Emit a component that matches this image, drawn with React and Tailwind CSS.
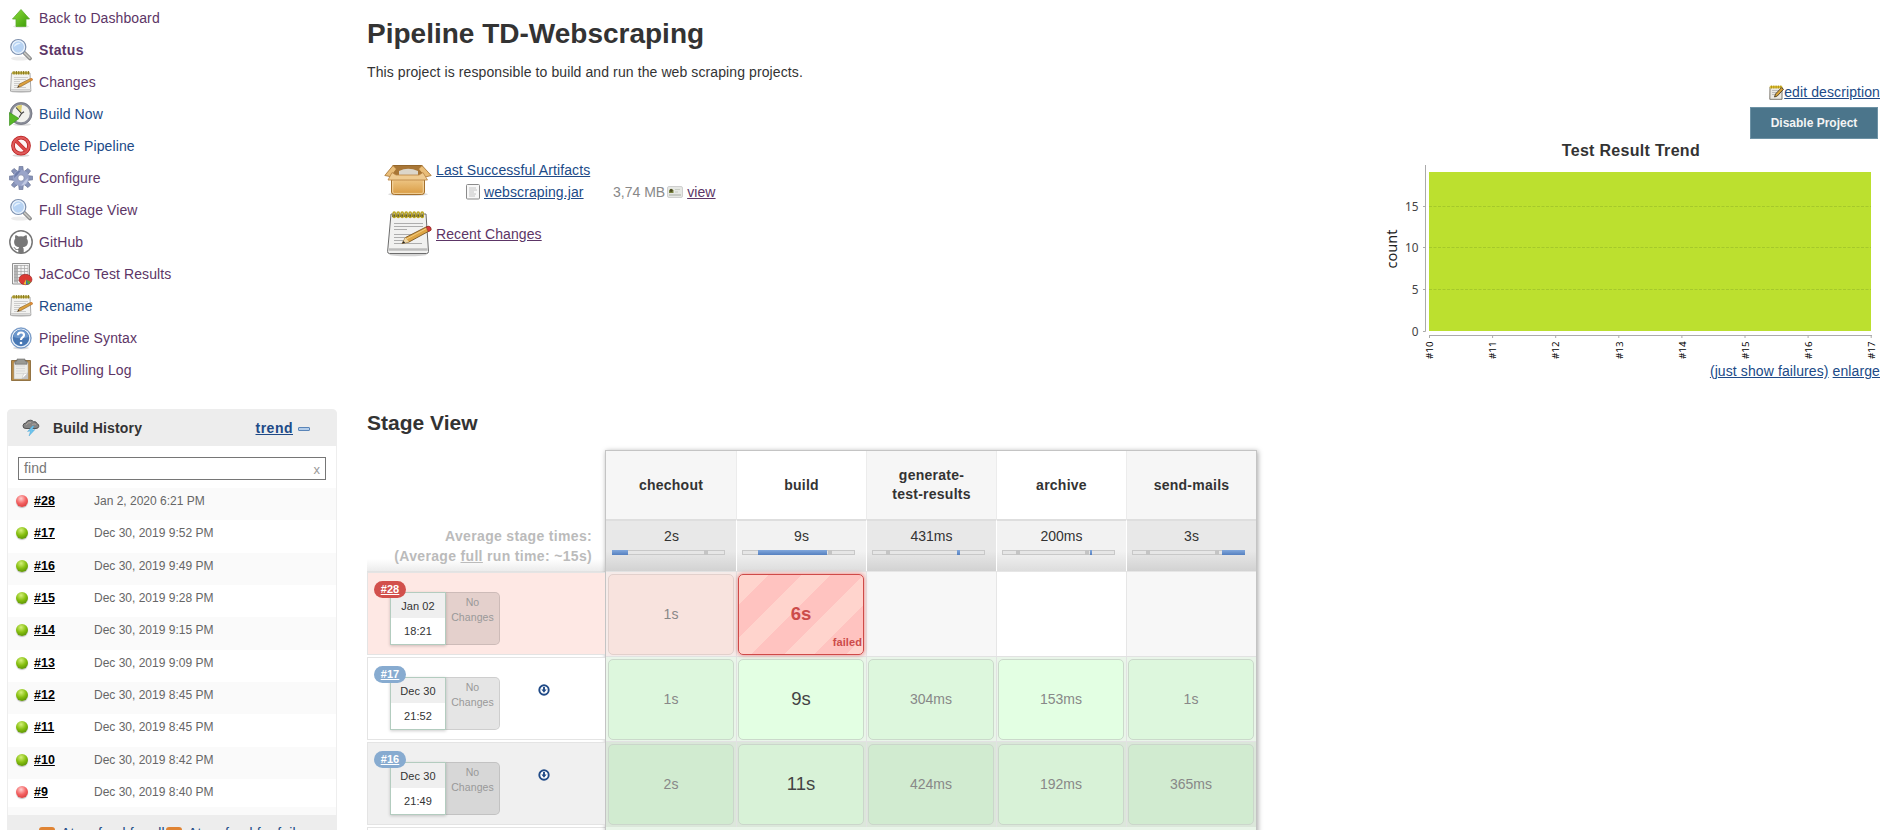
import React from "react";

const Arrow = () => (
  <svg width="24" height="24" viewBox="0 0 24 24">
    <defs>
      <linearGradient id="ga" x1="0" y1="0" x2="1" y2="1">
        <stop offset="0" stopColor="#8ede3c" />
        <stop offset="1" stopColor="#3a9a06" />
      </linearGradient>
    </defs>
    <ellipse cx="12" cy="20.5" rx="8" ry="1.5" fill="#e4e4e4" />
    <path d="M12 3.500 20.500 13H17v7.500H7V13H3.500Z" fill="url(#ga)" stroke="#5cab2c" strokeWidth=".8" />
  </svg>
);

const Search = () => (
  <svg width="24" height="24" viewBox="0 0 24 24">
    <ellipse cx="11" cy="20.500" rx="9" ry="2" fill="#ececec" />
    <path d="m15 14.500 6 6" stroke="#858585" strokeWidth="3.800" strokeLinecap="round" />
    <path d="m15.500 15 5.300 5.200" stroke="#c4c4c0" strokeWidth="1.800" strokeLinecap="round" />
    <circle cx="9.300" cy="9" r="7.500" fill="#bcd8f6" stroke="#7f90ac" strokeWidth="1.200" />
    <circle cx="9.300" cy="9" r="6.200" fill="#b7d3f3" stroke="#f2f7fc" strokeWidth="1.100" />
    <path d="M4.800 9a4.500 4.500 0 0 1 7-3.500Q8 6 4.800 9Z" fill="#e6f2fd" />
  </svg>
);

const Notepad = ({ size = 24 }) => (
  <svg width={size} height={size} viewBox="0 0 24 24">
    <ellipse cx="12" cy="21.700" rx="10" ry="1.300" fill="#d4d4d4" />
    <path d="M2.500 3h18.500l.9 18.200H1.500Z" fill="#f3f3f1" stroke="#888" strokeWidth=".7" />
    <path d="M2 19.500h19.700" stroke="#cfcfcf" />
    <path d="M3 1.700h17.500v2.500H3Z" fill="#c2b14a" />
    <path d="M5 1v3.500M7.400 1v3.500M9.800 1v3.500M12.200 1v3.500M14.600 1v3.500M17 1v3.500M19.400 1v3.500" stroke="#85761a" />
    <path d="M5 7.500h14M5 9.500h12M5 11.500h6M5 13.500h9M5 15.500h5M5 17.500h12" stroke="#b4b4b4" strokeWidth=".6" />
    <path d="m8.500 17.500 2-3.500L21 8.700q2.500-.5 2.500 1.300L12 16.500Z" fill="#dca03c" stroke="#87602a" strokeWidth=".6" />
    <path d="m20.700 8.800 1.300 2.500 1.500-1q.5-2.200-1.200-2.200Z" fill="#dc8a3c" />
    <path d="m8.500 17.500 1-1.700 1 .9Z" fill="#333" />
  </svg>
);

const NotepadLarge = () => (
  <svg width="46" height="46" viewBox="0 0 46 46">
    <ellipse cx="22" cy="43.500" rx="19" ry="1.800" fill="#d4d4d4" />
    <path d="M5 3h35l2.500 37.500q0 2-2 2h-37q-2 0-1.900-2Z" fill="#f1f1f0" stroke="#6c6c6c" />
    <path d="M3 38.500h38.500" stroke="#bcbcbc" strokeWidth="2.500" />
    <path d="M6 3.500h32v2.500H6Z" fill="#444" />
    <g fill="none" stroke="#b9a41c" strokeWidth="1.300">
      {[0, 1, 2, 3, 4, 5, 6, 7].map((i) => (
        <rect key={i} x={7 + i * 4} y="1" width="2.400" height="5.500" rx="1.200" />
      ))}
    </g>
    <path d="M8 12.500h29M8 15.500h29M8 18.500h13M8 23.500h24M8 26.500h19M8 29.500h15M8 32.500h28" stroke="#9c9c9c" strokeWidth=".8" />
    <path d="m16 32.500 3.500-6L41 15.500q4-.5 4 3.500L23 31Z" fill="#dea544" stroke="#7a5722" strokeWidth=".9" />
    <path d="m19.500 26.500 3.500 4.500-7 1.500Z" fill="#efd8a8" />
    <path d="M20.500 28 42 16.700" stroke="#f3cd80" />
    <path d="m40 16 2.500 4.700 2.500-1.500q.5-4-2.500-4Z" fill="#d8363c" stroke="#8c2a2a" strokeWidth=".6" />
    <path d="m16 32.500 1.500-2.600 1.700 1.900Z" fill="#222" />
  </svg>
);

const EditPad = () => (
  <svg width="15" height="15" viewBox="0 0 15 15">
    <path d="M1 2h12v12.300H.8Z" fill="#ece9e2" stroke="#6f6a60" strokeWidth=".9" />
    <path d="M.8.800h12.400v2.500H.8Z" fill="#e2c22e" />
    <path d="M2.500.500v3M4.800.500v3M7.100.500v3M9.400.500v3M11.700.500v3" stroke="#957d18" strokeWidth=".7" />
    <path d="M3 5.500h7M3 7.500h5M3 9.500h3" stroke="#aaa" strokeWidth=".7" />
    <path d="m5.500 12 1-3L12.500 2.700l2 1.500L8.300 11Z" fill="#dca63c" stroke="#4c3c20" strokeWidth=".9" />
  </svg>
);

const Clock = () => (
  <svg width="24" height="24" viewBox="0 0 24 24">
    <ellipse cx="13" cy="22.500" rx="9" ry="1.300" fill="#ddd" />
    <circle cx="12" cy="11.500" r="10" fill="#f3f3ee" stroke="#8a8d98" strokeWidth="2.400" />
    <circle cx="12" cy="11.500" r="11" fill="none" stroke="#696c78" strokeWidth=".6" />
    <path d="M12 11.500 7 5q2.500-2.500 6-2Z" fill="#ddcf6e" />
    <path d="m7 5.500 5.500 6-2.500 4M12.500 11.500l2.500-1.800" fill="none" stroke="#444" strokeWidth="1.100" />
    <path d="M.5 10.500 10 16.500.5 23.500Z" fill="#58b826" stroke="#2f8a12" strokeWidth=".6" />
  </svg>
);

const Deny = () => (
  <svg width="24" height="24" viewBox="0 0 24 24">
    <ellipse cx="12" cy="21.500" rx="8.500" ry="1.300" fill="#d8d8d8" />
    <circle cx="12" cy="11.700" r="8" fill="#fdf6f6" stroke="#b81e1e" strokeWidth="3.700" />
    <path d="m6.500 6.200 11 11" stroke="#c62a2a" strokeWidth="3.500" />
    <circle cx="12" cy="11.700" r="8" fill="none" stroke="#df5a5a" strokeWidth="2.200" />
    <path d="m6.500 6.200 11 11" stroke="#dc4a4a" strokeWidth="2.200" />
  </svg>
);

const teeth = [0, 45, 90, 135, 180, 225, 270, 315];
const Gear = () => (
  <svg width="24" height="24" viewBox="0 0 24 24">
    <g stroke="#6b7596" strokeWidth=".7" fill="#8793b8">
      {teeth.map((a) => (
        <path key={a} d="m9.600 6 .6-5.700h3.600l.6 5.700Z" transform={`rotate(${a} 12 12)`} />
      ))}
    </g>
    <circle cx="12" cy="12" r="8" fill="#9aa5c9" />
    <path d="M5 12a7 7 0 0 1 7-7.500Q9 9 5 12Z" fill="#6f7eab" />
    <path d="M19 12a7 7 0 0 1-7 7.500Q15 15 19 12Z" fill="#c0c8e2" />
    <circle cx="12" cy="12" r="3.200" fill="#fff" stroke="#727d9f" strokeWidth=".7" />
  </svg>
);

const Report = () => (
  <svg width="24" height="24" viewBox="0 0 24 24">
    <path d="M3.500 1.500h17v20.500h-17Z" fill="#f4f4f4" stroke="#777" strokeWidth=".8" />
    <path d="M5 3h3.500v17.500H5Z" fill="#b4b4b4" />
    <path d="M5 3.500h14M5 6.500h14M5 9.500h14M5 12.500h14M5 15.500h14M5 18.500h14M8.500 3v18M12 3v18M15.500 3v18M19 3v18" stroke="#a4a4a4" strokeWidth=".7" />
    <ellipse cx="16.500" cy="17.500" rx="6.500" ry="5.200" fill="#da3a34" stroke="#982020" strokeWidth=".6" />
    <path d="M17 17.500v5l-2.500-.3Z" fill="#eac83a" />
    <path d="m17 17.500 5 2.500q-1 2-3.500 2.500Z" fill="#5ba53a" />
    <path d="m17 17.500 2 4.800-2 .4Z" fill="#3f6cb0" />
  </svg>
);

const Help = () => (
  <svg width="24" height="24" viewBox="0 0 24 24">
    <ellipse cx="12" cy="22" rx="8" ry="1.300" fill="#ddd" />
    <circle cx="12" cy="12" r="10.300" fill="#4f7fbb" stroke="#7a9ac4" strokeWidth=".7" />
    <circle cx="12" cy="12" r="8.900" fill="#4878b4" stroke="#e8f0f8" strokeWidth="1.300" />
    <path d="M4.500 11A7.500 7.500 0 0 1 19.500 11Q12 13.500 4.500 11Z" fill="#6b97cc" />
    <path d="M9 9.300q0-2.800 3-2.800t3 2.500q0 1.300-1.500 2.300T12 14" fill="none" stroke="#fff" strokeWidth="2.200" />
    <circle cx="12" cy="17" r="1.300" fill="#fff" />
  </svg>
);

const Clipboard = () => (
  <svg width="24" height="24" viewBox="0 0 24 24">
    <path d="M2.500 2.500h19v20h-19Z" fill="#b88a45" stroke="#80602c" strokeWidth=".8" />
    <path d="M5 4.500h14V21H5Z" fill="#ecece8" stroke="#aaa" strokeWidth=".5" />
    <path d="M7 8h9M7 10.500h9M7 13h9M7 15.500h8" stroke="#d2d2d2" strokeWidth=".7" />
    <path d="m13 21 6-6v6Z" fill="#c4c4c4" />
    <path d="m13 21 1.500-5L19 15Z" fill="#fff" stroke="#aaa" strokeWidth=".4" />
    <path d="M8 1h8v2h2v3.200H6V3h2Z" fill="#9a9a94" stroke="#666" strokeWidth=".6" />
  </svg>
);

const GitHub = () => (
  <svg width="24" height="24" viewBox="0 0 24 24">
    <circle cx="12" cy="12" r="11.200" fill="#fff" stroke="#777" strokeWidth="1.500" />
    <path
      d="M9.300 23v-3c-2.500.4-3.300-.5-3.900-1.700-.4-.7-.9-1-1.200-1.300 1.500-.2 2 1 2.700 1.700.8.7 1.600.6 2.400.2.100-.8.500-1.300.9-1.700-3-.4-5.100-1.700-5.100-5.400 0-1.300.4-2.400 1.200-3.200-.3-.9-.4-2.200.1-3.400 1.300 0 2.400.7 3.200 1.300a9.600 9.600 0 0 1 4.800 0c.8-.6 1.900-1.300 3.200-1.300.5 1.200.4 2.500.1 3.400.8.800 1.200 1.900 1.200 3.200 0 3.700-2.100 5-5.100 5.400.6.500.9 1.300.9 2.500V23Z"
      fill="#777"
    />
  </svg>
);

const Box = () => (
  <svg width="48" height="36" viewBox="0 0 48 36">
    <defs>
      <linearGradient id="gb" x1="0" y1="0" x2="0" y2="1">
        <stop offset="0" stopColor="#efc888" />
        <stop offset="1" stopColor="#d99b42" />
      </linearGradient>
    </defs>
    <ellipse cx="24" cy="33.300" rx="20" ry="1.800" fill="#ddd" />
    <path d="M9 4.500h29l4 10H5Z" fill="#a87636" stroke="#94672b" />
    <path d="M15 10q9-4.500 19 0v5H15Z" fill="#dcd6ca" />
    <path d="M7.500 17.500h33V31q0 2.500-3 2.500h-27q-3 0-3-2.500Z" fill="url(#gb)" stroke="#a4702d" />
    <path d="M9 4.500.8 14.500l6 1.200L12.500 8ZM38 4.500l9.200 10-6 1.500L34.500 8Z" fill="#e9bd78" stroke="#a4702d" strokeWidth=".8" />
    <path d="m8 11.500-4 7.500h39.500L39 11.500 35 14H12Z" fill="#efcb91" stroke="#b98443" strokeWidth=".8" />
    <path d="M8.700 20v11q0 1.400 1.500 1.400h27.600q1.500 0 1.500-1.400V20" fill="none" stroke="#f7dfb4" strokeWidth=".8" />
  </svg>
);

const FileIcon = () => (
  <svg width="14" height="16" viewBox="0 0 14 16">
    <rect x=".5" y=".5" width="13" height="14.500" rx="1" fill="#f8f8f8" stroke="#8a8a8a" />
    <path d="M3 4h7M3 6h8M3 8h5M3 10h7M3 12h6" stroke="#b5b5b5" strokeWidth=".8" />
  </svg>
);

const Fingerprint = () => (
  <svg width="16" height="13" viewBox="0 0 16 13">
    <rect x=".5" y=".5" width="15" height="11" rx="1.500" fill="#e6e8e4" stroke="#cfcfcf" />
    <path d="M2 7V4.500q2-3.500 4.500 0V7Z" fill="#7a8440" />
    <circle cx="4.200" cy="4.500" r="1.400" fill="#4a4a20" />
    <path d="M8 3.500h5M8 6h3" stroke="#c8ccc4" />
    <path d="M2 9h12" stroke="#a8aca4" />
  </svg>
);

const Storm = () => (
  <svg width="18" height="18" viewBox="0 0 18 18">
    <path d="M4 9.500Q.7 9.500 1 6.700 1.300 4 4 4 5 1 8.500 1.200q2 0 3 1.500 3-.5 3.500 2 2.200.5 1.800 2.700-.3 2.100-2.800 2.100Z" fill="#858585" stroke="#4a4a4a" strokeWidth=".9" />
    <path d="M4 6q2-3 5-2.500M10 6q2-2 4-.5" fill="none" stroke="#b0a49c" strokeWidth=".9" />
    <path d="m10.500 7-5 5.500 3-.5L7 17l6-6.500-3 .5L12 7Z" fill="#6cc4ee" stroke="#449ed0" strokeWidth=".4" />
  </svg>
);

const Ball = ({ red }) => (
  <span
    className={
      "mt-px h-[12px] w-[12px] shrink-0 rounded-full shadow-[0_1px_1px_rgba(0,0,0,0.25)] " +
      (red
        ? "bg-[radial-gradient(circle_at_42%_30%,#ffd0d0_0%,#f46464_45%,#c92727_100%)]"
        : "bg-[radial-gradient(circle_at_42%_28%,#d5f07a_0%,#87c010_45%,#437a00_100%)]")
    }
  />
);

const nav = [
  ["Back to Dashboard", Arrow, 0],
  ["Status", Search, 2],
  ["Changes", Notepad, 0],
  ["Build Now", Clock, 1],
  ["Delete Pipeline", Deny, 1],
  ["Configure", Gear, 0],
  ["Full Stage View", Search, 0],
  ["GitHub", GitHub, 0],
  ["JaCoCo Test Results", Report, 0],
  ["Rename", Notepad, 1],
  ["Pipeline Syntax", Help, 0],
  ["Git Polling Log", Clipboard, 0],
];
const navStyle = ["text-[#5c3566]", "text-[#204a87]", "font-bold tracking-[0.35px] text-[#5c3566]"];

const builds = [
  ["#28", "Jan 2, 2020 6:21 PM", true],
  ["#17", "Dec 30, 2019 9:52 PM"],
  ["#16", "Dec 30, 2019 9:49 PM"],
  ["#15", "Dec 30, 2019 9:28 PM"],
  ["#14", "Dec 30, 2019 9:15 PM"],
  ["#13", "Dec 30, 2019 9:09 PM"],
  ["#12", "Dec 30, 2019 8:45 PM"],
  ["#11", "Dec 30, 2019 8:45 PM"],
  ["#10", "Dec 30, 2019 8:42 PM"],
  ["#9", "Dec 30, 2019 8:40 PM", true],
];

const Rss = () => (
  <svg className="mt-[4px] shrink-0" width="16" height="16" viewBox="0 0 16 16">
    <rect width="16" height="16" rx="3" fill="#e08434" />
    <circle cx="4.500" cy="11.500" r="1.500" fill="#fff" />
    <path d="M3 7.500a5.500 5.500 0 0 1 5.500 5.500M3 4a9 9 0 0 1 9 9" stroke="#fff" strokeWidth="1.500" fill="none" />
  </svg>
);

function Sidebar() {
  return (
    <aside className="w-[367px] shrink-0">
      <nav className="flex h-[409px] flex-col pt-[2px]">
        {nav.map(([label, Icon, s]) => (
          <a key={label} className={"flex h-8 items-center gap-[6px] pl-[9px] " + navStyle[s]}>
            <Icon />
            <span>{label}</span>
          </a>
        ))}
      </nav>
      <section className="ml-[7px] w-[330px] rounded-t-[5px] border-x border-[#eeeeee]">
        <header className="-mx-px flex h-[37px] items-center rounded-t-[5px] bg-[#ededed] pl-[15px] font-bold">
          <Storm />
          <span className="ml-[13px] grow tracking-[0.15px]">Build History</span>
          <a className="tracking-[0.5px] text-[#204a87] underline">trend</a>
          <span className="mt-[2px] mr-[27px] ml-[5px] h-1 w-3 rounded-[1px] border border-[#5a85b8] bg-[#b4cdea]" />
        </header>
        <div className="h-[42px] px-[10px] pt-[11px]">
          <div className="flex h-[23px] items-center justify-between border border-[#767676] px-[5px] text-[#777]">
            <span className="pb-px">find</span>
            <span className="mt-[2px] text-[13px] text-[#999]">x</span>
          </div>
        </div>
        <div className="flex h-[327px] flex-col overflow-hidden">
          {builds.map(([id, date, red], i) => (
            <div
              key={id}
              className={
                "flex shrink-0 pt-[6px] pl-[8px] text-[12px] leading-[14px] tracking-normal " +
                (i === 9 ? "h-[28px] " : "h-[32.35px] ") +
                (i % 2 ? "bg-white" : "bg-[#fafafa]")
              }
            >
              <Ball red={red} />
              <a className="ml-[6px] w-[60px] text-[12.5px] font-bold text-black underline">{id}</a>
              <span className="text-[#666]">{date}</span>
            </div>
          ))}
          <div className="h-4 bg-[#fafafa]" />
        </div>
        <footer className="-mx-px flex h-[60px] bg-[#ededed] pt-[8px] pl-[32px] text-[#204a87]">
          <Rss />
          <span className="ml-[6px] w-[105px] whitespace-nowrap">Atom feed for all</span>
          <Rss />
          <span className="ml-[6px] whitespace-nowrap">Atom feed for failures</span>
        </footer>
      </section>
    </aside>
  );
}

const xt = ["#10", "#11", "#12", "#13", "#14", "#15", "#16", "#17"];
const yt = [
  [15, 136.5],
  [10, 177.5],
  [5, 219.5],
  [0, 261.5],
];
function Chart() {
  return (
    <svg width="510" height="200" viewBox="-10 90 510 200" className="block font-['Noto_Sans',sans-serif] tracking-normal">
      <rect x="49" y="102" width="442" height="159" fill="#bce02f" />
      <path d="M49 136.500H491M49 177.500H491M49 219.500H491" stroke="#a5c92a" strokeDasharray="3 1.500" />
      <path d="M45.500 95V261.500M43 136.500h2.500M43 177.500h2.500M43 219.500h2.500M43 261.500h2.500M49 265.500H492" stroke="#aaa" fill="none" />
      {xt.map((t, i) => (
        <g key={t}>
          <path d={`M${49.5 + i * 63.1} 265v3`} stroke="#aaa" />
          <text transform={`translate(${53.2 + i * 63.1} 289) rotate(-90)`} fontSize="9.800" fill="#000">
            {t}
          </text>
        </g>
      ))}
      {yt.map(([t, y]) => (
        <text key={t} x="38.500" y={y + 4.3} textAnchor="end" fontSize="11.800" fill="#444">
          {t}
        </text>
      ))}
      <text transform="translate(17 198.500) rotate(-90)" fontSize="14.500" fill="#222">
        count
      </text>
    </svg>
  );
}

const stages = [
  ["chechout", "2s", 0, 16, [94]],
  ["build", "9s", 16, 69, [88]],
  ["generate-test-results", "431ms", 85, 3, [16]],
  ["archive", "200ms", 88, 2, [16, 85]],
  ["send-mails", "3s", 90, 23, [16, 85]],
];

const rows = [
  { id: "#28", d: "Jan 02", t: "18:21", kind: "fail", cells: ["1s", "6s", "", "", ""] },
  { id: "#17", d: "Dec 30", t: "21:52", kind: "ok", cells: ["1s", "9s", "304ms", "153ms", "1s"] },
  { id: "#16", d: "Dec 30", t: "21:49", kind: "alt", cells: ["2s", "11s", "424ms", "192ms", "365ms"] },
];
const rowBg = { fail: "bg-[#fee8e4]", ok: "bg-white", alt: "bg-[#f0f0f0]" };

function RunInfo({ r }) {
  return (
    <div className={"relative mb-[2px] h-[83px] border-y border-l border-[#e4e4e4] pt-[19px] pl-[22px] " + rowBg[r.kind]}>
      <div className="flex text-[10.5px] leading-[15px] tracking-[0.1px]">
        <div className="z-[1] h-[53px] w-[56px] border border-[#b3ccbf] bg-white text-center text-[11px] text-[#333] shadow-[0_1px_3px_rgba(0,0,0,0.2)]">
          <div className="h-[25px] bg-[#efefef] pt-[6px]">{r.d}</div>
          <div className="pt-[6px]">{r.t}</div>
        </div>
        <div className="-ml-px h-[53px] w-[55px] rounded-r-[5px] border border-black/10 bg-black/10 pt-[2px] text-center text-[#999]">
          No
          <br />
          Changes
        </div>
        {r.kind !== "fail" && (
          <svg className="mt-[7px] ml-[38px]" width="12" height="12" viewBox="0 0 12 12">
            <circle cx="6" cy="6" r="4.700" fill="#fff" stroke="#204a87" strokeWidth="1.900" />
            <path d="M6 3v3" stroke="#204a87" strokeWidth="1.900" />
            <path d="M3.400 5.600h5.200L6 8.800Z" fill="#204a87" />
          </svg>
        )}
      </div>
      <a
        className={
          "absolute top-[8px] left-[6px] z-[2] h-[17px] w-[32px] rounded-full text-center text-[11px] leading-[16px] font-bold text-white underline " +
          (r.kind === "fail" ? "bg-[#d2504c]" : "bg-[#87abd0]")
        }
      >
        {r.id}
      </a>
    </div>
  );
}

function cellClass(kind, i) {
  const odd = i % 2 === 1;
  if (kind === "fail")
    return i === 1
      ? "border-[#cf4a48] shadow-[0_0_4px_rgba(220,50,50,0.6)] bg-[repeating-linear-gradient(135deg,#ffd4cd_0,#ffd4cd_21px,#ffc3c0_21px,#ffc3c0_44px)]"
      : "border-[#e2d0cc] bg-[#f8e3de]";
  if (kind === "ok") return "border-[#cbd9cb] " + (odd ? "bg-[#e3ffe3]" : "bg-[#ddf7dd]");
  return "border-[#cbd6cb] " + (odd ? "bg-[#d8f2d7]" : "bg-[#d1ebd0]");
}
function cellText(kind, i) {
  if (i !== 1) return " text-[#888]";
  return kind === "fail" ? " text-[18.5px] font-bold text-[#cc4c4a]" : " text-[18.5px] text-[#444]";
}
const cellOuter = { fail: "bg-[#f6ebe9]", ok: "bg-[#e9f5e9]", alt: "bg-[#dbe7da]" };

function StageTable() {
  return (
    <div className="flex">
      <div className="w-[238px] shrink-0">
        <div className="flex h-[122px] flex-col items-end justify-end border-b border-[#e2e2e2] bg-[linear-gradient(to_top,#ececec_0,#fff_12px)] pr-[13px] pb-[5px] leading-5 font-bold tracking-[0.33px] text-[#bbb]">
          <div>Average stage times:</div>
          <div>
            (Average <span className="underline">full</span> run time: ~15s)
          </div>
        </div>
        {rows.map((r) => (
          <RunInfo key={r.id} r={r} />
        ))}
        <div className="h-[83px] border-t border-l border-[#e4e4e4] bg-white" />
      </div>
      <div className="w-[652px] shrink-0 border border-[#c4c4c4] shadow-[1px_1px_5px_rgba(0,0,0,0.35)]">
        <div className="grid grid-cols-5">
          {stages.map(([name, avg, x, w, marks], i) => (
            <div key={name}>
              <div
                className={
                  "flex h-[68px] items-center justify-center px-[18px] text-center leading-[19px] font-bold tracking-[0.25px] text-[#333] " +
                  (i ? "border-l border-[#ececec] " : "") +
                  (i % 2 ? "bg-white" : "bg-[#f6f6f6]")
                }
              >
                {name}
              </div>
              <div
                className={
                  "h-[52px] border-t-2 border-[#dedede] pt-[6px] " +
                  (i % 2
                    ? "bg-[linear-gradient(#f2f2f2_60%,#dddddd)]"
                    : "bg-[linear-gradient(#e8e8e8_60%,#d2d2d2)]") +
                  (i ? " border-l border-l-white pl-[5px]" : " pl-[6px]")
                }
              >
                <div className="-ml-[5px] text-center leading-[19px] tracking-normal">{avg}</div>
                <div className="relative mt-[4px] h-[5px] w-[113px] border border-[#c8c8c8] bg-[#e6e6e6]">
                  {marks.map((m) => (
                    <span key={m} className="absolute -top-px h-[5px] w-[4px] bg-[#c4c4c4]" style={{ left: m - 3 }} />
                  ))}
                  <span
                    className="absolute -top-px h-[5px] bg-[linear-gradient(#82a8dc,#5580c0)]"
                    style={{ left: x - 1, width: w }}
                  />
                </div>
              </div>
            </div>
          ))}
        </div>
        {rows.map((r) => (
          <div key={r.id} className="grid h-[85px] grid-cols-5">
            {r.cells.map((c, i) =>
              c ? (
                <div
                  key={i}
                  className={
                    "border-t border-[#e2e2e2] p-[2px] " + (i ? "border-l pl-[1px] " : "") + cellOuter[r.kind]
                  }
                >
                  <div
                    className={
                      "relative flex h-[81px] items-center justify-center rounded-[5px] border pb-[2px] tracking-normal " +
                      cellClass(r.kind, i) +
                      cellText(r.kind, i)
                    }
                  >
                    {c}
                    {r.kind === "fail" && i === 1 && (
                      <span className="absolute right-[1px] bottom-[4px] text-[11px] leading-[16px] tracking-[0.1px]">failed</span>
                    )}
                  </div>
                </div>
              ) : (
                <div
                  key={i}
                  className={"border-t border-l border-[#e6e6e6] " + (i % 2 ? "bg-white" : "bg-[#f7f7f7]")}
                />
              )
            )}
          </div>
        ))}
        <div className="h-[85px] border-t border-[#e2e2e2] bg-[#e9f5e9]" />
      </div>
    </div>
  );
}

export default function App() {
  return (
    <div className="flex h-[830px] w-full overflow-hidden bg-white font-['Liberation_Sans',Arial,sans-serif] text-[14px] leading-5 tracking-[0.1px] text-[#333]">
      <Sidebar />
      <main className="grow">
        <div className="flex h-[409px] justify-between">
          <div className="pt-[18px]">
            <h1 className="text-[28px] leading-8 font-bold tracking-normal">Pipeline TD-Webscraping</h1>
            <p className="mt-[12px]">This project is responsible to build and run the web scraping projects.</p>
            <div className="mt-[77px] flex">
              <div className="w-[69px] pt-[2px] pl-[17px]">
                <Box />
              </div>
              <div className="flex flex-col items-start">
                <a className="leading-[22px] text-[#204a87] underline">Last Successful Artifacts</a>
                <div className="flex items-center pl-[30px] leading-[22px]">
                  <FileIcon />
                  <a className="ml-[4px] w-[129px] text-[#204a87] underline">webscraping.jar</a>
                  <span className="tracking-normal text-[#888]">3,74 MB</span>
                  <span className="mr-[4px] ml-[2px]">
                    <Fingerprint />
                  </span>
                  <a className="text-[#5c3566] underline">view</a>
                </div>
              </div>
            </div>
            <div className="mt-[8px] flex items-center">
              <div className="w-[69px] pl-[19px]">
                <NotepadLarge />
              </div>
              <a className="text-[#5c3566] underline">Recent Changes</a>
            </div>
          </div>
          <div className="flex w-[522px] flex-col items-end pt-[82px] pr-[12px]">
            <div className="flex items-center">
              <span className="mt-px">
                <EditPad />
              </span>
              <a className="text-[#204a87] underline">edit description</a>
            </div>
            <button className="mt-[5px] mr-[2px] h-8 w-32 border border-[#6d92a5] bg-[#4b758b] text-[12px] font-bold tracking-normal text-[#f4f4f4]">
              Disable Project
            </button>
            <div className="mt-[2px] mr-[180px] text-[16px] leading-[19px] font-bold tracking-[0.3px]">Test Result Trend</div>
            <Chart />
            <div className="mt-px flex gap-1 text-[#204a87]">
              <a className="underline">(just show failures)</a>
              <a className="underline">enlarge</a>
            </div>
          </div>
        </div>
        <h2 className="h-[41px] pt-[2px] text-[21px] leading-[24px] font-bold tracking-normal">Stage View</h2>
        <StageTable />
      </main>
    </div>
  );
}
